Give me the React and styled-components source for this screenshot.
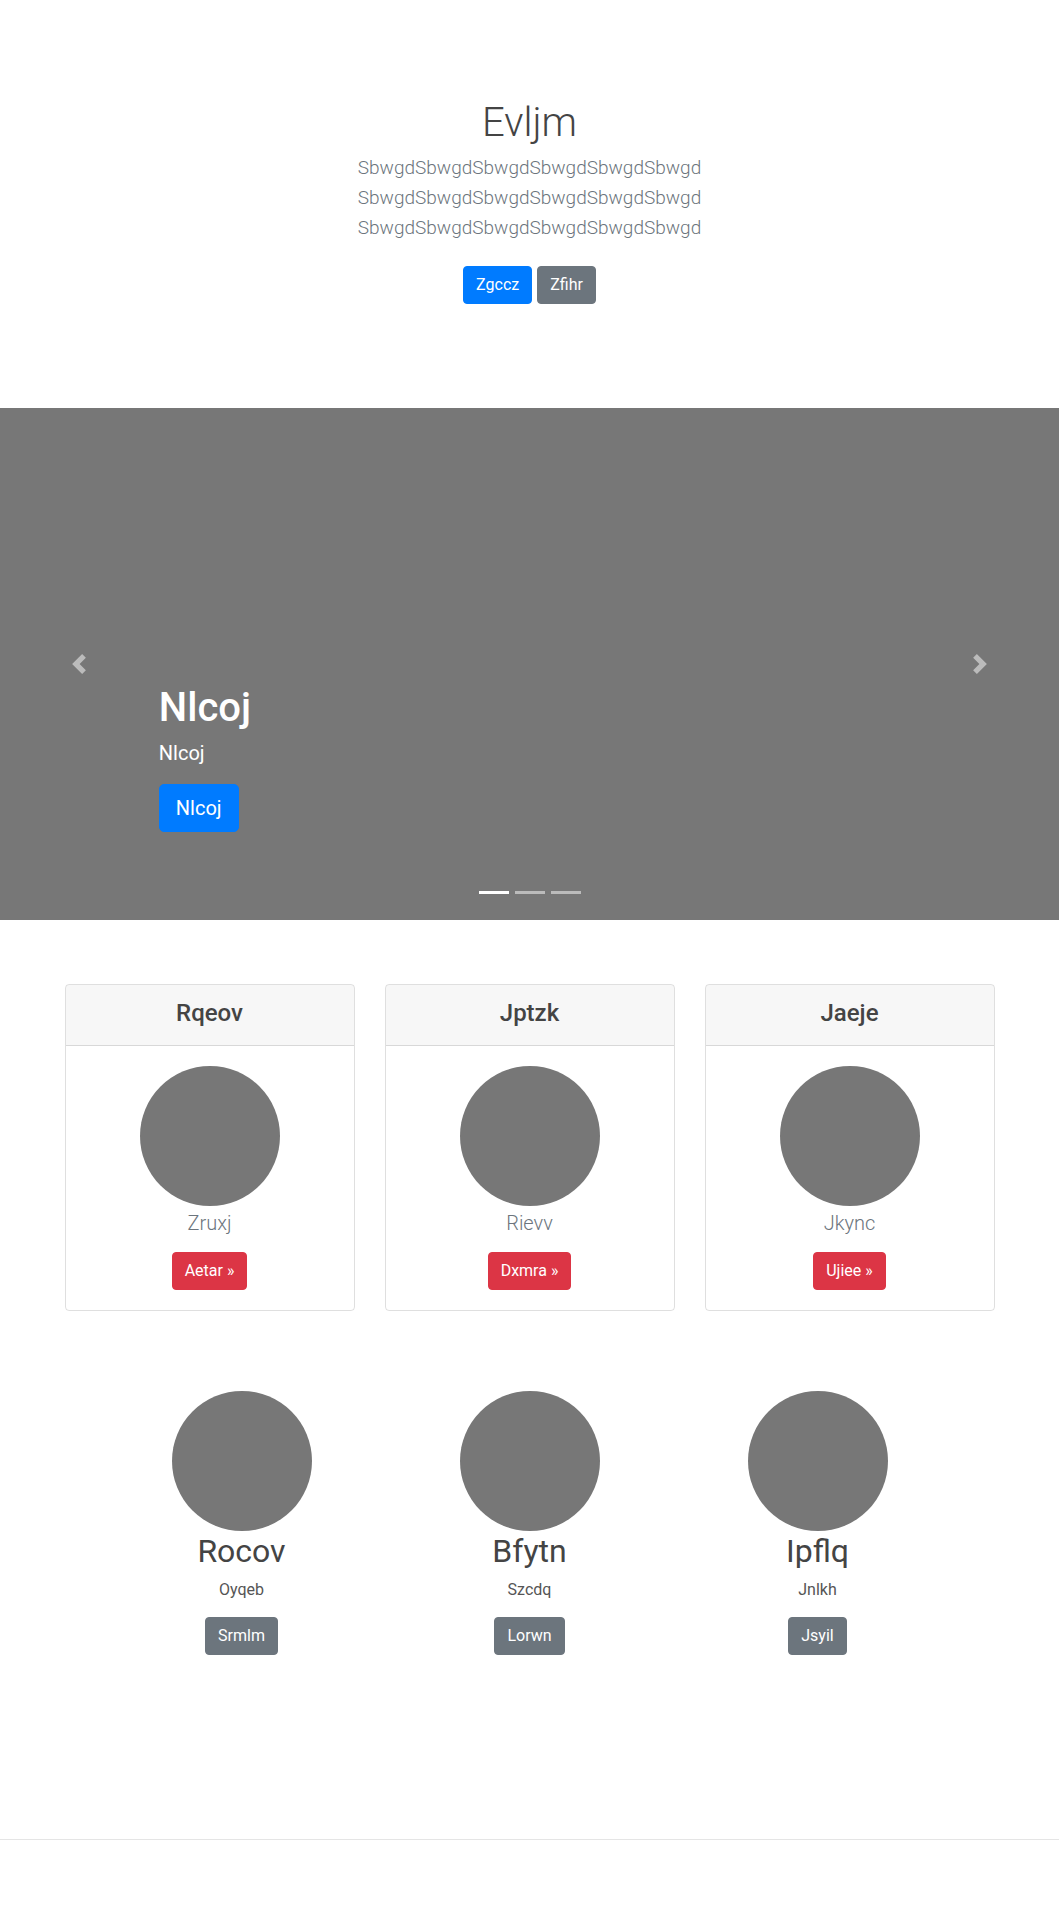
import styled, { createGlobalStyle } from "styled-components"

const GlobalStyle = createGlobalStyle`
    body {
        margin: 0;
        background: #fff;
        color: #212529;
        font-family: "Segoe UI", Roboto, "Helvetica Neue", Arial, sans-serif;
        font-size: 16px;
        line-height: 1.5;
    }
`

const pricing = [
    { title: "Rqeov", name: "Zruxj", action: "Aetar »" },
    { title: "Jptzk", name: "Rievv", action: "Dxmra »" },
    { title: "Jaeje", name: "Jkync", action: "Ujiee »" },
]

const people = [
    { name: "Rocov", text: "Oyqeb", action: "Srmlm" },
    { name: "Bfytn", text: "Szcdq", action: "Lorwn" },
    { name: "Ipflq", text: "Jnlkh", action: "Jsyil" },
]

const leadLines = [
    "SbwgdSbwgdSbwgdSbwgdSbwgdSbwgd",
    "SbwgdSbwgdSbwgdSbwgdSbwgdSbwgd",
    "SbwgdSbwgdSbwgdSbwgdSbwgdSbwgd",
]

function Chevron({ dir }) {
    const d = dir === "prev"
        ? "M5.25 0l-4 4 4 4 1.5-1.5-2.5-2.5 2.5-2.5-1.5-1.5z"
        : "M2.75 0l-1.5 1.5 2.5 2.5-2.5 2.5 1.5 1.5 4-4-4-4z"
    return (
        <svg width="20" height="20" viewBox="0 0 8 8" fill="#fff">
            <path d={d} />
        </svg>
    )
}

export default function App() {
    return (
        <>
            <GlobalStyle />
            <Hero>
                <HeroTitle>Evljm</HeroTitle>
                <Lead>
                    {leadLines.map((line, i) => (
                        <LeadLine key={i}>{line}</LeadLine>
                    ))}
                </Lead>
                <ButtonRow>
                    <Button $variant="primary">Zgccz</Button>
                    <Button $variant="secondary">Zfihr</Button>
                </ButtonRow>
            </Hero>

            <Carousel>
                <Control $side="prev"><Chevron dir="prev" /></Control>
                <Control $side="next"><Chevron dir="next" /></Control>
                <Caption>
                    <CaptionTitle>Nlcoj</CaptionTitle>
                    <CaptionText>Nlcoj</CaptionText>
                    <Button $variant="primary" $large>Nlcoj</Button>
                </Caption>
                <Indicators>
                    <Indicator $active />
                    <Indicator />
                    <Indicator />
                </Indicators>
            </Carousel>

            <CardGrid>
                {pricing.map((item) => (
                    <Card key={item.title}>
                        <CardHeader>{item.title}</CardHeader>
                        <CardBody>
                            <Avatar />
                            <CardName>{item.name}</CardName>
                            <Button $variant="danger">{item.action}</Button>
                        </CardBody>
                    </Card>
                ))}
            </CardGrid>

            <Marketing>
                {people.map((p) => (
                    <Person key={p.name}>
                        <Avatar />
                        <PersonName>{p.name}</PersonName>
                        <PersonText>{p.text}</PersonText>
                        <Button $variant="secondary">{p.action}</Button>
                    </Person>
                ))}
            </Marketing>

            <Footer />
        </>
    )
}

const colors = {
    primary: "#007bff",
    secondary: "#6c757d",
    danger: "#dc3545",
}

const Hero = styled.section`
    display: flex;
    flex-direction: column;
    align-items: center;
    box-sizing: border-box;
    height: 408px;
    padding-top: 99px;
    text-align: center;
`

const HeroTitle = styled.h1`
    margin: 0 0 6px;
    font-size: 40px;
    line-height: 48px;
    font-weight: 300;
    color: #444;
`

const Lead = styled.p`
    margin: 0 0 23px;
    font-size: 19px;
    line-height: 30px;
    font-weight: 300;
    color: #6c757d;
`

const LeadLine = styled.span`
    display: block;
`

const ButtonRow = styled.div`
    display: flex;
    gap: 5px;
`

const Button = styled.button`
    display: inline-block;
    box-sizing: border-box;
    border: 1px solid ${(p) => colors[p.$variant]};
    border-radius: ${(p) => (p.$large ? "5px" : "4px")};
    background: ${(p) => colors[p.$variant]};
    color: #fff;
    font-family: inherit;
    font-size: ${(p) => (p.$large ? "20px" : "16px")};
    line-height: ${(p) => (p.$large ? "30px" : "24px")};
    padding: ${(p) => (p.$large ? "8px 16px" : "6px 12px")};
    font-weight: 400;
    cursor: pointer;
`

const Carousel = styled.section`
    position: relative;
    height: 512px;
    background: #777;
    overflow: hidden;
`

const Control = styled.div`
    position: absolute;
    top: 0;
    bottom: 0;
    ${(p) => (p.$side === "prev" ? "left: 0;" : "right: 0;")}
    width: 15%;
    display: flex;
    align-items: center;
    justify-content: center;
    opacity: 0.5;
`

const Caption = styled.div`
    position: absolute;
    left: 15%;
    right: 15%;
    bottom: 88px;
    display: flex;
    flex-direction: column;
    align-items: flex-start;
    color: #fff;
`

const CaptionTitle = styled.h1`
    margin: 0 0 6px;
    font-size: 40px;
    line-height: 48px;
    font-weight: 500;
`

const CaptionText = styled.p`
    margin: 0 0 16px;
    font-size: 20px;
    line-height: 30px;
    font-weight: 400;
`

const Indicators = styled.div`
    position: absolute;
    left: 0;
    right: 0;
    bottom: 26px;
    display: flex;
    justify-content: center;
    gap: 6px;
`

const Indicator = styled.span`
    width: 30px;
    height: 3px;
    background: ${(p) => (p.$active ? "#fff" : "rgba(255, 255, 255, 0.5)")};
`

const CardGrid = styled.div`
    display: grid;
    grid-template-columns: repeat(3, 290px);
    gap: 30px;
    justify-content: center;
    padding-top: 64px;
`

const Card = styled.div`
    display: flex;
    flex-direction: column;
    border: 1px solid rgba(0, 0, 0, 0.125);
    border-radius: 4px;
    overflow: hidden;
`

const CardHeader = styled.h4`
    margin: 0;
    height: 61px;
    box-sizing: border-box;
    padding-top: 10px;
    border-bottom: 1px solid rgba(0, 0, 0, 0.125);
    background: rgba(0, 0, 0, 0.03);
    text-align: center;
    font-size: 24px;
    line-height: 36px;
    font-weight: 500;
    color: #444;
`

const CardBody = styled.div`
    display: flex;
    flex-direction: column;
    align-items: center;
    padding: 20px 20px 20px;
`

const Avatar = styled.div`
    width: 140px;
    height: 140px;
    border-radius: 50%;
    background: #777;
    flex-shrink: 0;
`

const CardName = styled.p`
    margin: 2px 0 14px;
    font-size: 20px;
    line-height: 30px;
    font-weight: 300;
    color: #6c757d;
`

const Marketing = styled.div`
    display: grid;
    grid-template-columns: repeat(3, 288px);
    justify-content: center;
    margin-top: 80px;
`

const Person = styled.div`
    display: flex;
    flex-direction: column;
    align-items: center;
    text-align: center;
`

const PersonName = styled.h2`
    margin: 1px 0 8px;
    font-size: 32px;
    line-height: 38px;
    font-weight: 400;
    color: #444;
`

const PersonText = styled.p`
    margin: 0 0 15px;
    font-size: 16px;
    line-height: 24px;
    color: #555;
`

const Footer = styled.footer`
    margin-top: 184px;
    height: 80px;
    border-top: 1px solid #e5e5e5;
`
